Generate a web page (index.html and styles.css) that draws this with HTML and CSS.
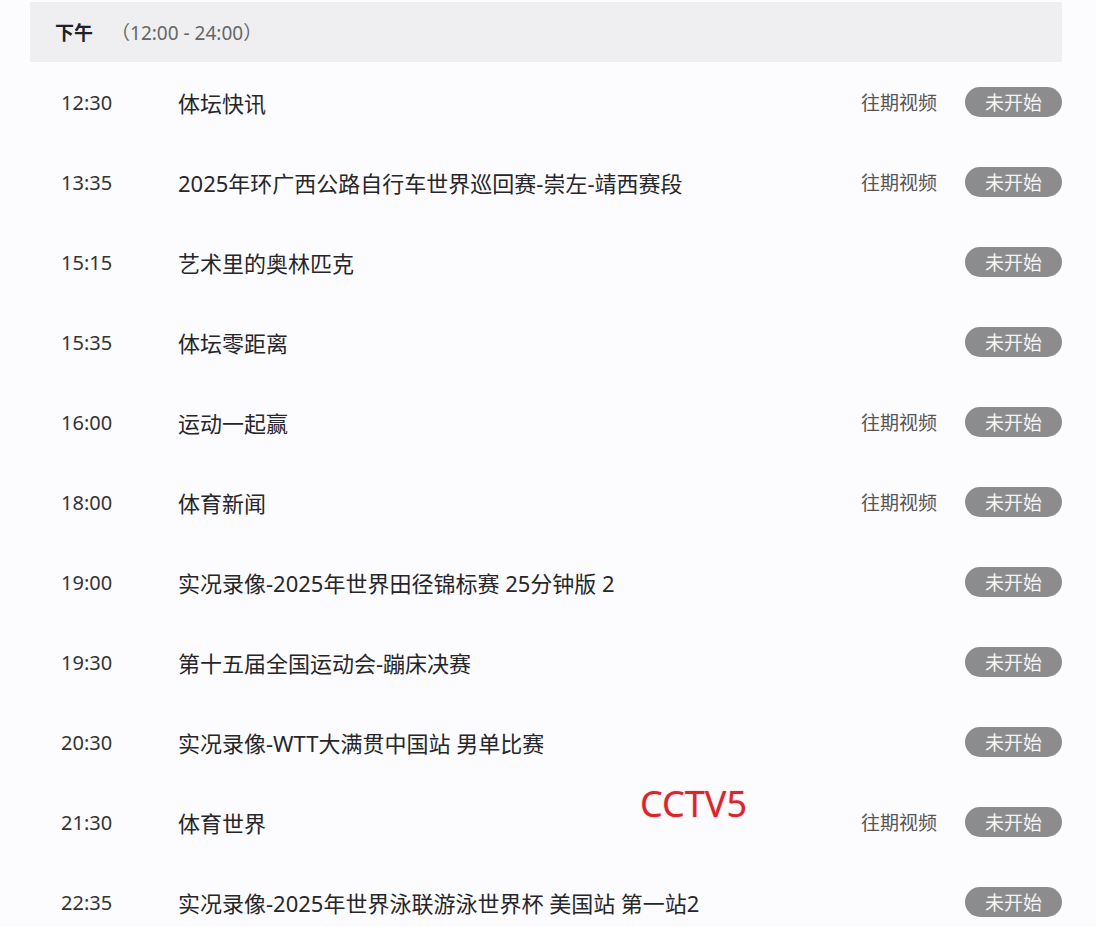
FILE: index.html
```html
<!DOCTYPE html>
<html lang="zh-CN">
<head>
	<meta charset="UTF-8">
	<meta name="viewport" content="width=device-width, initial-scale=1.0">
	<title>CCTV5 节目单</title>
	<link rel="stylesheet" href="styles.css">
</head>
<body>
	<div class="schedule">
		<div class="period">
			<span class="period-name">下午</span>
			<span class="period-range">（12:00 - 24:00）</span>
		</div>

		<div class="row">
			<span class="time">12:30</span>
			<span class="title">体坛快讯</span>
			<a class="replay" href="#">往期视频</a>
			<span class="status">未开始</span>
		</div>
		<div class="row">
			<span class="time">13:35</span>
			<span class="title">2025年环广西公路自行车世界巡回赛-崇左-靖西赛段</span>
			<a class="replay" href="#">往期视频</a>
			<span class="status">未开始</span>
		</div>
		<div class="row">
			<span class="time">15:15</span>
			<span class="title">艺术里的奥林匹克</span>
			<span class="status">未开始</span>
		</div>
		<div class="row">
			<span class="time">15:35</span>
			<span class="title">体坛零距离</span>
			<span class="status">未开始</span>
		</div>
		<div class="row">
			<span class="time">16:00</span>
			<span class="title">运动一起赢</span>
			<a class="replay" href="#">往期视频</a>
			<span class="status">未开始</span>
		</div>
		<div class="row">
			<span class="time">18:00</span>
			<span class="title">体育新闻</span>
			<a class="replay" href="#">往期视频</a>
			<span class="status">未开始</span>
		</div>
		<div class="row">
			<span class="time">19:00</span>
			<span class="title">实况录像-2025年世界田径锦标赛 25分钟版 2</span>
			<span class="status">未开始</span>
		</div>
		<div class="row">
			<span class="time">19:30</span>
			<span class="title">第十五届全国运动会-蹦床决赛</span>
			<span class="status">未开始</span>
		</div>
		<div class="row">
			<span class="time">20:30</span>
			<span class="title">实况录像-WTT大满贯中国站 男单比赛</span>
			<span class="status">未开始</span>
		</div>
		<div class="row">
			<span class="time">21:30</span>
			<span class="title">体育世界</span>
			<a class="replay" href="#">往期视频</a>
			<span class="status">未开始</span>
		</div>
		<div class="row">
			<span class="time">22:35</span>
			<span class="title">实况录像-2025年世界泳联游泳世界杯 美国站 第一站2</span>
			<span class="status">未开始</span>
		</div>

		<!-- channel watermark -->
		<div class="channel-mark">CCTV5</div>
	</div>
</body>
</html>
```

FILE: styles.css
```css
body {
	margin: 0;
	background-color: #fcfcfe;
	font-family: "Noto Sans", "Noto Sans CJK SC", sans-serif;
	color: #2a2a2e;
}

.schedule {
	position: relative;
	width: 1032px;
	margin-left: 30px;
	padding-top: 2px;
}

/* Period header bar */
.period {
	display: flex;
	align-items: center;
	height: 60px;
	padding-left: 25px;
	background-color: #efeff1;
}

.period-name {
	font-size: 19px;
	font-weight: bold;
	color: #222;
}

.period-range {
	margin-left: 18px;
	font-size: 19px;
	color: #666;
}

/* Programme rows */
.row {
	display: flex;
	align-items: center;
	height: 80px;
	padding-left: 31px;
}

.time {
	width: 117px;
	flex-shrink: 0;
	font-size: 20px;
	color: #333;
}

.title {
	flex: 1;
	font-size: 22px;
	color: #26262a;
}

.replay {
	margin-right: 28px;
	font-size: 19px;
	color: #555;
	text-decoration: none;
}

.status {
	display: inline-flex;
	align-items: center;
	justify-content: center;
	width: 97px;
	height: 30px;
	border-radius: 15px;
	background-color: #8c8c8e;
	color: #f4f4f4;
	font-size: 19px;
}

.channel-mark {
	position: absolute;
	left: 610px;
	top: 786px;
	font-size: 36px;
	line-height: 1;
	color: #d6282b;
	text-shadow: 0 0 2px rgba(214, 40, 43, 0.35);
}
```
